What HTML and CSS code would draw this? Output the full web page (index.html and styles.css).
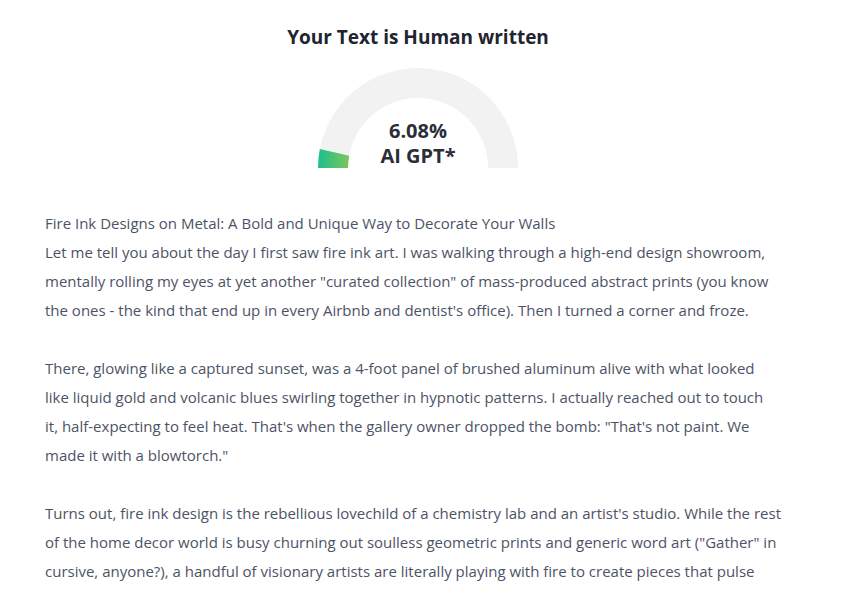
FILE: index.html
```html
<!DOCTYPE html>
<html>
<head>
<meta charset="utf-8">
<link rel="stylesheet" href="styles.css">
</head>
<body>
<div class="card">
  <h1 class="title">Your Text is Human written</h1>
  <div class="gauge">
    <svg class="gauge-svg" width="200" height="100" viewBox="0 0 200 100">
      <defs>
        <linearGradient id="g" x1="0" y1="0" x2="1" y2="0">
          <stop offset="0" stop-color="#1dbf8e"/>
          <stop offset="1" stop-color="#7cc55a"/>
        </linearGradient>
      </defs>
      <path d="M0 100 A100 100 0 0 1 200 100 L170 100 A70 70 0 0 0 30 100 Z" fill="#f2f2f2"/>
      <path d="M0 100 A100 100 0 0 1 1.825 80.96 L31.28 87.67 A70 70 0 0 0 30 100 Z" fill="url(#g)"/>
    </svg>
    <div class="gauge-label">
      <div>6.08%</div>
      <div>AI GPT*</div>
    </div>
  </div>
  <div class="content">
    <p>Fire Ink Designs on Metal: A Bold and Unique Way to Decorate Your Walls<br>Let me tell you about the day I first saw fire ink art. I was walking through a high-end design showroom,<br>mentally rolling my eyes at yet another "curated collection" of mass-produced abstract prints (you know<br>the ones - the kind that end up in every Airbnb and dentist's office). Then I turned a corner and froze.</p>
    <p>There, glowing like a captured sunset, was a 4-foot panel of brushed aluminum alive with what looked<br>like liquid gold and volcanic blues swirling together in hypnotic patterns. I actually reached out to touch<br>it, half-expecting to feel heat. That's when the gallery owner dropped the bomb: "That's not paint. We<br>made it with a blowtorch."</p>
    <p>Turns out, fire ink design is the rebellious lovechild of a chemistry lab and an artist's studio. While the rest<br>of the home decor world is busy churning out soulless geometric prints and generic word art ("Gather" in<br>cursive, anyone?), a handful of visionary artists are literally playing with fire to create pieces that pulse<br>with energy.</p>
  </div>
</div>
</body>
</html>
```
FILE: styles.css
```css
html, body {
  margin: 0;
  padding: 0;
  background: #ffffff;
}
body {
  font-family: "Segoe UI", "Open Sans", "Noto Sans", sans-serif;
  overflow: hidden;
  height: 591px;
}
.card {
  background: #fff;
  box-shadow: 0 0 6px rgba(120, 130, 170, 0.12);
  padding: 22px 55px 0 45px;
  height: 591px;
  box-sizing: border-box;
  overflow: hidden;
}
.title {
  margin: 0;
  text-align: center;
  font-size: 19px;
  font-weight: 700;
  color: #222430;
  line-height: 30px;
}
.gauge {
  position: relative;
  width: 200px;
  height: 100px;
  margin: 16px auto 0;
}
.gauge-svg {
  display: block;
}
.gauge-label {
  position: absolute;
  left: 0;
  right: 0;
  top: 50px;
  text-align: center;
  font-size: 20px;
  font-weight: 700;
  color: #2b2d38;
  line-height: 25px;
}
.content {
  margin-top: 41px;
  color: #4d5366;
  font-size: 15px;
  line-height: 29px;
  white-space: nowrap;
}
.content p {
  margin: 0 0 29px 0;
}
```
